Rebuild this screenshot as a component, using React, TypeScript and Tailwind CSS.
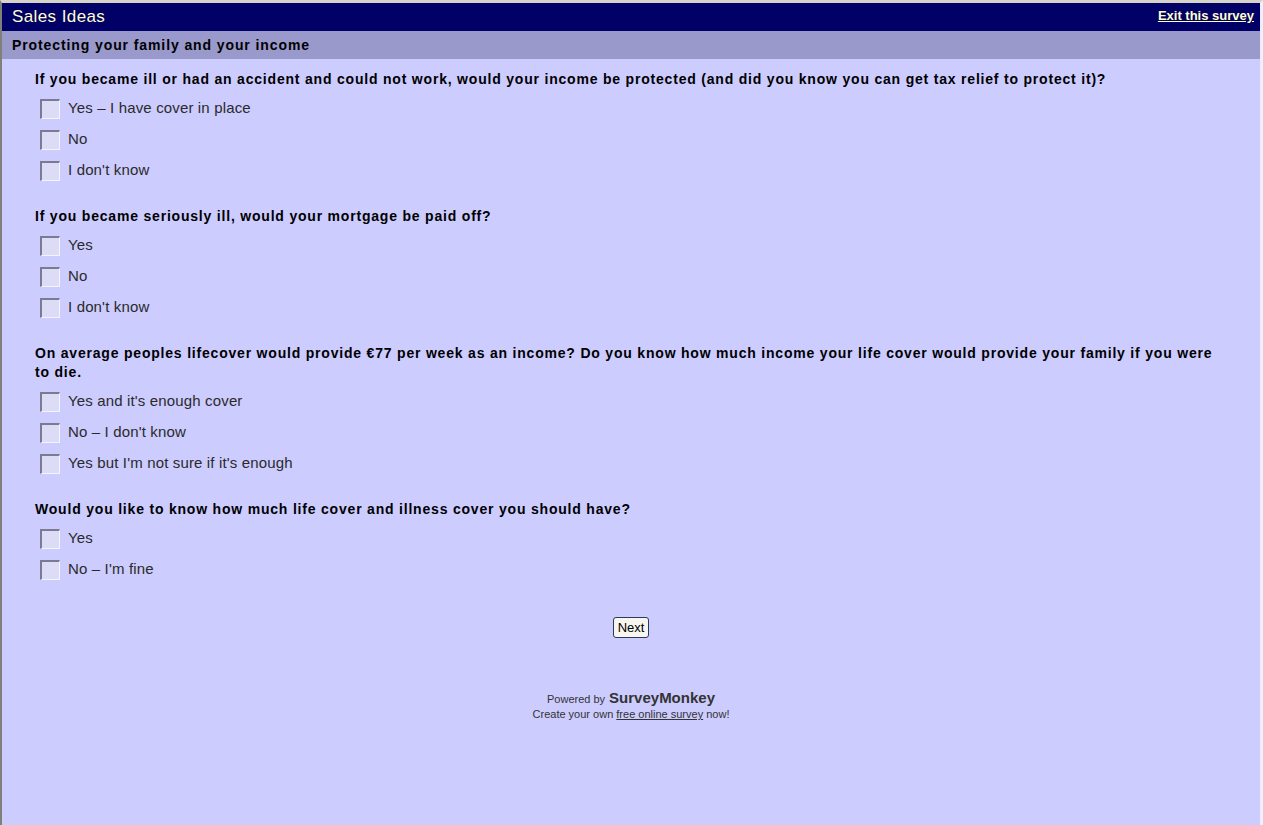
const questions: { text: string; options: string[] }[] = [
  {
    text: "If you became ill or had an accident and could not work, would your income be protected (and did you know you can get tax relief to protect it)?",
    options: ["Yes – I have cover in place", "No", "I don't know"],
  },
  {
    text: "If you became seriously ill, would your mortgage be paid off?",
    options: ["Yes", "No", "I don't know"],
  },
  {
    text: "On average peoples lifecover would provide €77 per week as an income? Do you know how much income your life cover would provide your family if you were to die.",
    options: ["Yes and it's enough cover", "No – I don't know", "Yes but I'm not sure if it's enough"],
  },
  {
    text: "Would you like to know how much life cover and illness cover you should have?",
    options: ["Yes", "No – I'm fine"],
  },
];

function Box() {
  return (
    <span className="block w-[20px] h-[20px] shrink-0 border-t-2 border-l-2 border-t-[#7a7a92] border-l-[#7a7a92] border-b border-r border-b-[#f4f4ff] border-r-[#f4f4ff] bg-[#dcdcf6]" />
  );
}

export default function App() {
  return (
    <div
      className="h-[825px] w-full overflow-hidden bg-[#ccccff] border-t-[3px] border-t-[#d8d4c8] border-l-2 border-l-[#80807a] border-r-[3px] border-r-[#eeeefc]"
      style={{ fontFamily: '"Liberation Sans", Arial, sans-serif' }}
    >
      <div className="h-[28px] bg-[#000066] flex items-center justify-between pl-[10px] pr-[6px]">
        <span className="text-[17px] tracking-[0.4px] text-[#ffffcc]">Sales Ideas</span>
        <a className="text-[13px] font-bold underline text-[#ffffcc] -mt-[2px]" href="#">
          Exit this survey
        </a>
      </div>
      <div className="h-[28px] bg-[#9999cc] flex items-center pl-[10px]">
        <span className="text-[14px] tracking-[0.9px] font-bold text-black">
          Protecting your family and your income
        </span>
      </div>

      <div className="pl-[33px] pr-[35px] pt-[11px]">
        {questions.map((q, i) => (
          <div key={i} className="mb-[21px]">
            <div className="text-[14px] leading-[19px] tracking-[0.8px] font-bold text-black">{q.text}</div>
            <div className="mt-[4px]">
              {q.options.map((o) => (
                <label key={o} className="h-[31px] flex items-center gap-[8px] pl-[5px]">
                  <Box />
                  <span className="text-[15px] tracking-[0.15px] text-[#2a2a2a]">{o}</span>
                </label>
              ))}
            </div>
          </div>
        ))}
      </div>

      <div className="flex flex-col items-center -mt-[21px] pt-[32px]">
        <button className="h-[21px] px-[4px] text-[13px] text-black bg-[#f7f7ef] border border-[#2a3a5a] rounded-[3px] leading-none">
          Next
        </button>
        <div className="mt-[51px] text-[11px] text-[#333333] flex items-baseline gap-[4px] leading-[18px]">
          <span>Powered by</span>
          <span className="text-[15px] font-bold text-[#333333]">SurveyMonkey</span>
        </div>
        <div className="text-[11px] text-[#333333] leading-[13px]">
          Create your own <span className="underline">free online survey</span> now!
        </div>
      </div>
    </div>
  );
}
